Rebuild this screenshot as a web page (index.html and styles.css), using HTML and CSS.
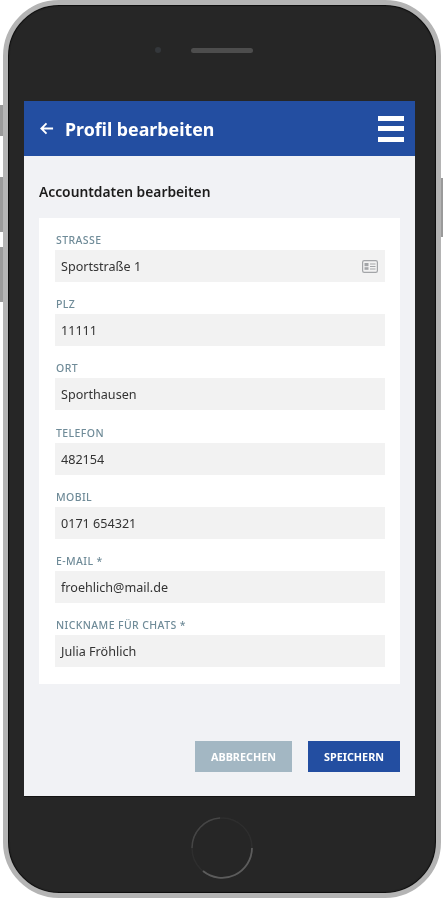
FILE: index.html
```html
<!DOCTYPE html>
<html lang="de">
<head>
<meta charset="utf-8">
<title>Profil bearbeiten</title>
<link rel="stylesheet" href="styles.css">
</head>
<body>
<div class="phone">
  <span class="side side-l1"></span>
  <span class="side side-l2"></span>
  <span class="side side-l3"></span>
  <span class="side side-r1"></span>
  <div class="bezel">
    <div class="top-bar">
      <span class="camera"></span>
      <span class="speaker"></span>
    </div>
    <main class="screen">
      <header class="app-header">
        <div class="header-left">
          <svg class="back-icon" viewBox="0 0 16 16" width="15" height="15" aria-hidden="true"><path d="M15 8H2.5M8 2.5 2.5 8 8 13.5" fill="none" stroke="#fff" stroke-width="2"/></svg>
          <h1 class="app-title">Profil bearbeiten</h1>
        </div>
        <div class="menu-icon"><span></span><span></span><span></span></div>
      </header>
      <section class="content">
        <h2 class="section-title">Accountdaten bearbeiten</h2>
        <form class="card">
          <div class="field"><div class="label">STRASSE</div><div class="input"><span>Sportstraße 1</span>
            <svg class="card-icon" viewBox="0 0 16 13" width="16" height="13" aria-hidden="true"><rect x="0.6" y="0.6" width="14.8" height="11.8" rx="1.6" fill="none" stroke="#a3a5a8" stroke-width="1.2"/><rect x="2.5" y="3" width="4" height="3.2" fill="#a3a5a8"/><rect x="2.5" y="7.2" width="4" height="2.6" fill="#a3a5a8"/><path d="M8 4h5.5M8 6.5h5.5M8 9h5.5" stroke="#a3a5a8" stroke-width="1.1"/></svg></div></div>
          <div class="field"><div class="label">PLZ</div><div class="input"><span>11111</span></div></div>
          <div class="field"><div class="label">ORT</div><div class="input"><span>Sporthausen</span></div></div>
          <div class="field"><div class="label">TELEFON</div><div class="input"><span>482154</span></div></div>
          <div class="field"><div class="label">MOBIL</div><div class="input"><span>0171 654321</span></div></div>
          <div class="field"><div class="label">E-MAIL *</div><div class="input"><span>froehlich@mail.de</span></div></div>
          <div class="field"><div class="label">NICKNAME FÜR CHATS *</div><div class="input"><span>Julia Fröhlich</span></div></div>
        </form>
        <div class="actions">
          <div class="btn btn-cancel">ABBRECHEN</div>
          <div class="btn btn-save">SPEICHERN</div>
        </div>
      </section>
    </main>
    <div class="bottom-bar">
      <svg class="home" viewBox="0 0 64 64" width="64" height="64" aria-hidden="true">
        <circle cx="32" cy="32" r="30" fill="none" stroke="#2e2e2e" stroke-width="1.5"/>
        <path d="M2 32A30 30 0 0 1 30 2" fill="none" stroke="#454545" stroke-width="1.5"/>
        <path d="M62 32A30 30 0 0 1 13 55" fill="none" stroke="#5c5c5c" stroke-width="1.8"/>
      </svg>
    </div>
  </div>
</div>
</body>
</html>
```
FILE: styles.css
```css
* { box-sizing: border-box; }
html, body { margin: 0; padding: 0; background: #fff; }
body { width: 443px; height: 900px; overflow: hidden; font-family: "Noto Sans", sans-serif; }

.phone { position: relative; width: 438px; height: 898px; margin: 0 0 0 3px; }
.side { position: absolute; width: 3px; background: #9a9a9a; }
.side-l1 { left: -3px; top: 105px; height: 31px; }
.side-l2 { left: -3px; top: 177px; height: 55px; }
.side-l3 { left: -3px; top: 247px; height: 55px; }
.side-r1 { right: -2px; width: 4px; top: 178px; height: 59px; }

.bezel {
  position: relative;
  width: 100%; height: 100%;
  display: flex; flex-direction: column; align-items: flex-start;
  background: #262626;
  border: 5px solid #b4b4b4;
  border-radius: 56px;
  box-shadow: inset 0 0 1px 1px #0e0e0e;
  overflow: hidden;
}
.top-bar { flex: 0 0 96px; width: 100%; display: flex; justify-content: center; align-items: center; gap: 30px; padding: 0 37px 6px 0; }
.camera { width: 6px; height: 6px; border-radius: 50%; background: #34373b; }
.speaker { width: 62px; height: 5px; border-radius: 3px; background: #4d4d4d; }

.screen { flex: 0 0 695px; width: 391px; margin-left: 16px; background: #f1f2f5; display: flex; flex-direction: column; filter: blur(0.4px); box-shadow: 0 1px 0 #141414; }
.app-header { flex: 0 0 55px; background: #234ea1; display: flex; align-items: center; justify-content: space-between; padding: 0 11px 0 15px; }
.header-left { display: flex; align-items: center; gap: 11px; }
.back-icon { display: block; }
.app-title { margin: 0; color: #fff; font-size: 17.8px; font-weight: 700; line-height: 24px; }
.menu-icon { display: flex; flex-direction: column; gap: 5.5px; width: 26px; }
.menu-icon span { display: block; height: 5px; background: #fff; }

.content { flex: 1; display: flex; flex-direction: column; padding: 0 15px 24px; }
.section-title { margin: 25px 0 15px; font-size: 13.8px; line-height: 22px; font-weight: 600; color: #1c1c1c; }
.card { background: #fff; padding: 14px 15px 17px 16px; display: flex; flex-direction: column; gap: 14.2px; }
.field { display: flex; flex-direction: column; gap: 2px; }
.label { font-size: 10.5px; line-height: 16px; font-weight: 500; letter-spacing: 0.4px; color: #6f8b98; padding-left: 1px; }
.input { height: 32px; background: #f2f2f2; display: flex; align-items: center; justify-content: space-between; padding: 1px 7px 0 6px; font-size: 12.6px; color: #333; }
.card-icon { display: block; }

.actions { margin-top: auto; display: flex; justify-content: flex-end; gap: 16px; }
.btn { height: 31px; display: flex; align-items: center; justify-content: center; font-size: 10.8px; font-weight: 700; color: #fff; }
.btn-cancel { width: 97px; background: #a3b7c3; }
.btn-save { width: 92px; background: #234ea1; }

.bottom-bar { flex: 1; width: 100%; display: flex; justify-content: center; align-items: center; padding: 7px 0 0 0; }
.home { display: block; margin-left: -1px; }
```
